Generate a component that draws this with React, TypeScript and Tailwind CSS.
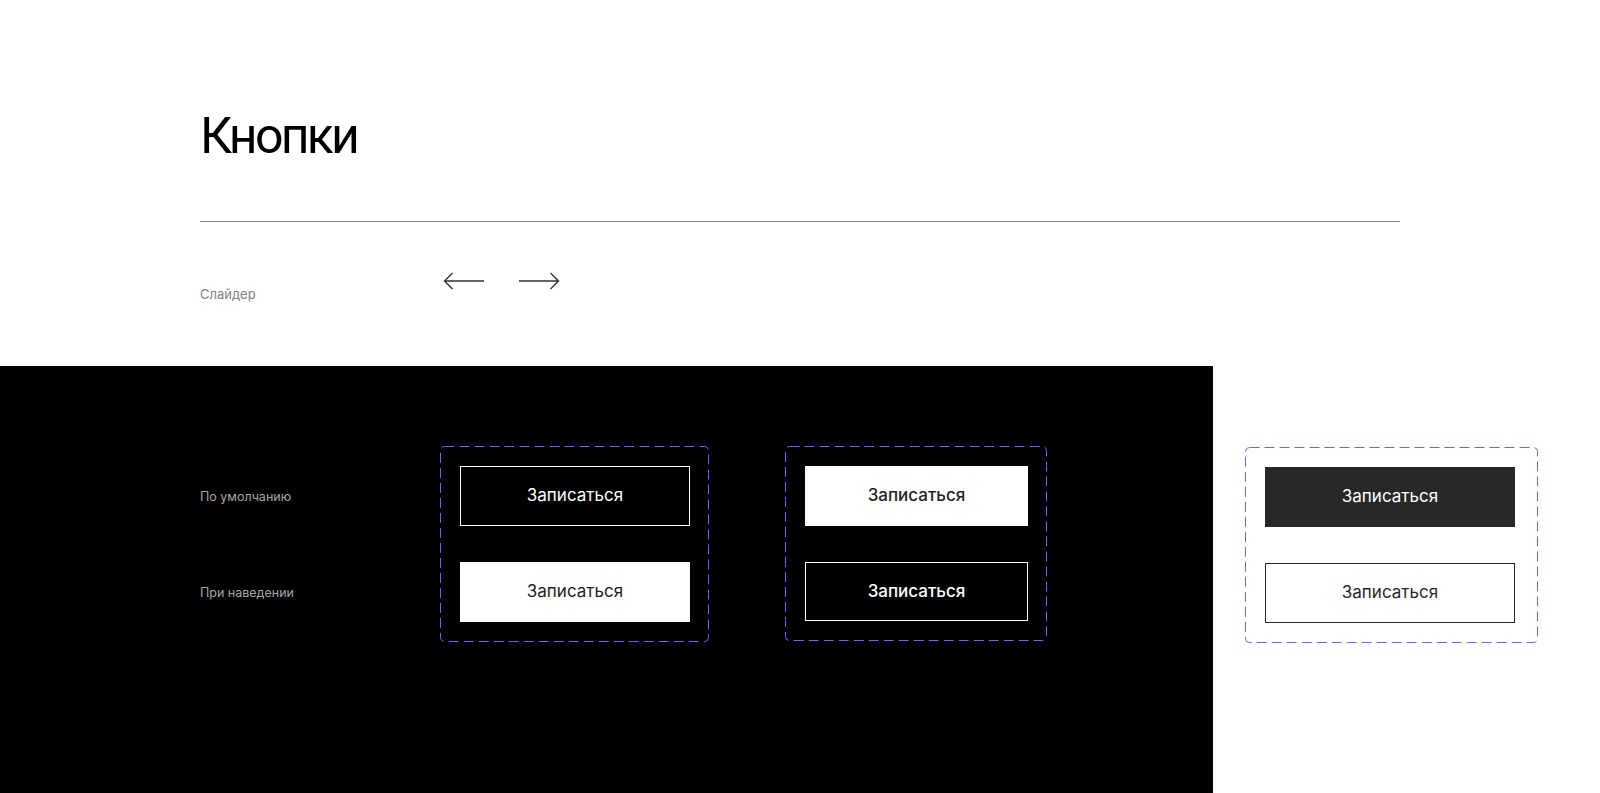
const ArrowLeft = () => (
  <svg width="41" height="18" viewBox="0 0 41 18" fill="none">
    <path d="M41 9H1.5M9.5 1L1.5 9L9.5 17" stroke="#333333" strokeWidth="1.4" />
  </svg>
);

const ArrowRight = () => (
  <svg width="41" height="18" viewBox="0 0 41 18" fill="none">
    <path d="M0 9H39.5M31.5 1L39.5 9L31.5 17" stroke="#333333" strokeWidth="1.4" />
  </svg>
);

const DashedBox = ({ children, className }: { children: React.ReactNode; className: string }) => (
  <div className={"relative flex flex-col gap-[36px] pt-[20px] pb-[20px] pl-[20px] pr-[19px] " + className}>
    <svg className="absolute inset-0 w-full h-full pointer-events-none" fill="none">
      <rect
        x="0.5"
        y="0.5"
        width="calc(100% - 1px)"
        height="calc(100% - 1px)"
        rx="4"
        stroke="#7062FF"
        strokeWidth="1"
        strokeDasharray="10 5"
      />
    </svg>
    {children}
  </div>
);

export default function App() {
  return (
    <div className="w-[1600px] h-[793px] bg-white overflow-hidden font-['Inter',sans-serif]">
      <div className="h-[366px] pl-[200px] pt-[111px] flex flex-col">
        <h1 className="text-[50px] leading-none font-normal text-black tracking-[-0.055em] font-['Roboto',sans-serif]">
          Кнопки
        </h1>
        <div className="mt-[60px] w-[1200px] border-t border-[#8c8c8c]" />
        <div className="mt-[50px] flex items-start">
          <div className="w-[243px] mt-[14px] text-[13px] leading-4 text-[#808080]">
            Слайдер
          </div>
          <div className="flex gap-[35px]">
            <ArrowLeft />
            <ArrowRight />
          </div>
        </div>
      </div>

      <div className="flex h-[427px]">
        <div className="w-[1213px] bg-black pl-[200px] pt-[80px] flex items-start">
          <div className="w-[240px] flex flex-col gap-[36px] pt-[21px] text-[12.5px] text-[#a6a6a6]">
            <div className="h-[60px] flex items-center">По умолчанию</div>
            <div className="h-[60px] flex items-center">При наведении</div>
          </div>

          <DashedBox className="w-[269px]">
            <button className="h-[60px] w-[230px] border border-white text-white text-[17px] flex items-center justify-center">
              Записаться
            </button>
            <button className="h-[60px] w-[230px] bg-white text-[#222222] text-[17px] flex items-center justify-center">
              Записаться
            </button>
          </DashedBox>

          <DashedBox className="w-[262px] ml-[76px]">
            <button className="h-[60px] w-[223px] bg-white text-[#222222] text-[17px] font-medium flex items-center justify-center">
              Записаться
            </button>
            <button className="h-[59px] w-[223px] border border-white text-white text-[17px] font-medium flex items-center justify-center">
              Записаться
            </button>
          </DashedBox>
        </div>

        <div className="flex-1 bg-white pl-[32px] pt-[81px] flex items-start">
          <DashedBox className="w-[293px]">
            <button className="h-[60px] w-[250px] bg-[#282828] text-white text-[17px] flex items-center justify-center">
              Записаться
            </button>
            <button className="h-[60px] w-[250px] border border-[#282828] text-[#282828] text-[17px] flex items-center justify-center">
              Записаться
            </button>
          </DashedBox>
        </div>
      </div>
    </div>
  );
}
